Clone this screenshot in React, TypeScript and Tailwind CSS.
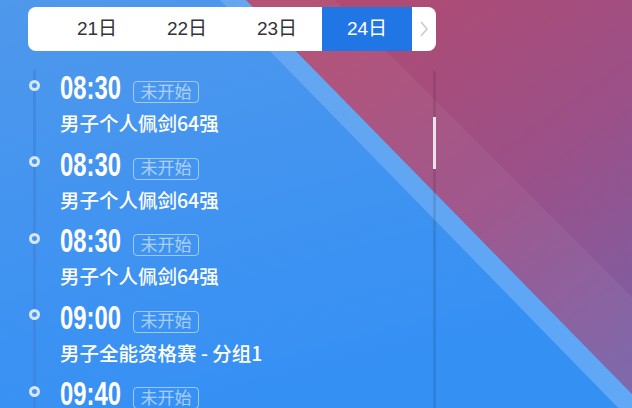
import React from 'react'

const days = ['21日', '22日', '23日', '24日']

const events = [
  { time: '08:30', status: '未开始', name: '男子个人佩剑64强' },
  { time: '08:30', status: '未开始', name: '男子个人佩剑64强' },
  { time: '08:30', status: '未开始', name: '男子个人佩剑64强' },
  { time: '09:00', status: '未开始', name: '男子全能资格赛 - 分组1' },
  { time: '09:40', status: '未开始', name: '男子个人佩剑32强' },
]

const cjk = { fontFamily: '"Liberation Sans", "Noto Sans CJK SC", sans-serif' }

function Backdrop() {
  return (
    <svg className="absolute inset-0 h-full w-full" viewBox="0 0 632 408" preserveAspectRatio="none">
      <defs>
        <linearGradient id="blue" x1="0" y1="0" x2="0.4" y2="1">
          <stop offset="0" stopColor="#4f98ec" />
          <stop offset="1" stopColor="#3590f4" />
        </linearGradient>
        <linearGradient id="pink" x1="0.2" y1="0" x2="0.9" y2="1">
          <stop offset="0" stopColor="#b24a70" />
          <stop offset="0.55" stopColor="#9a5088" />
          <stop offset="1" stopColor="#7a60a6" />
        </linearGradient>
        <linearGradient id="stripe" x1="0" y1="0" x2="1" y2="1">
          <stop offset="0" stopColor="#ffffff" stopOpacity="0.14" />
          <stop offset="1" stopColor="#ffffff" stopOpacity="0.22" />
        </linearGradient>
      </defs>
      <rect width="632" height="408" fill="url(#blue)" />
      <polygon points="220,0 246,0 632,394 632,422" fill="url(#stripe)" />
      <polygon points="246,0 632,0 632,394" fill="url(#pink)" />
      <polygon points="246,0 335,0 632,297 632,394" fill="#ffffff" fillOpacity="0.05" />
    </svg>
  )
}

function DayTabs() {
  return (
    <div className="flex h-[44px] overflow-hidden rounded-[8px] bg-white pl-[24px]" style={cjk}>
      {days.map((d, i) => (
        <div
          key={d}
          className={
            i === 3
              ? 'flex w-[90px] items-center justify-center bg-[#2176e5] text-[19px] text-white'
              : 'flex w-[90px] items-center justify-center text-[19px] text-[#333]'
          }
        >
          {d}
        </div>
      ))}
      <div className="flex w-[24px] items-center justify-center">
        <svg width="10" height="18" viewBox="0 0 10 18" fill="none">
          <path d="M2 2l6 7-6 7" stroke="#c7cbd3" strokeWidth="1.6" />
        </svg>
      </div>
    </div>
  )
}

function EventRow({ time, status, name }: { time: string; status: string; name: string }) {
  return (
    <div className="relative h-[76.5px] pt-[2px]">
      <span className="absolute left-[-31px] top-[9.5px] h-[11px] w-[11px] rounded-full border-[3px] border-[#d6e7f9] bg-[#4a95ea]" />
      <div className="flex items-start">
        <div className="w-[61px] overflow-visible">
          <span
            className="inline-block origin-left scale-x-[0.7] whitespace-nowrap text-[34px] font-bold leading-[30px] text-white"
            style={{ fontFamily: '"Liberation Sans", sans-serif' }}
          >
            {time}
          </span>
        </div>
        <span
          className="ml-[12px] mt-[9px] flex h-[22px] w-[66px] items-center justify-center rounded-[4px] border-[1.5px] border-white/50 text-[17px] leading-none text-white/55"
          style={cjk}
        >
          {status}
        </span>
      </div>
      <div
        className="mt-[6px] whitespace-nowrap text-[19.5px] font-medium leading-[24px] text-white"
        style={{ fontFamily: '"Noto Sans CJK SC", sans-serif' }}
      >
        {name}
      </div>
    </div>
  )
}

export default function App() {
  return (
    <div className="relative h-[408px] w-[632px] overflow-hidden">
      <Backdrop />
      <div className="relative ml-[28px] w-[408px] pt-[7px]">
        <DayTabs />
        <div className="mt-[19px] flex h-[400px]">
          <div className="ml-[5px] flex-1 border-l-[3px] border-[#3f86de]/80 pl-[24px]">
            {events.map((e, i) => (
              <EventRow key={i} {...e} />
            ))}
          </div>
          <div className="mt-[1px] w-[3px] bg-black/10">
            <div className="mt-[46px] h-[52px] w-[3px] bg-[#eee2ea]" />
          </div>
        </div>
      </div>
    </div>
  )
}
